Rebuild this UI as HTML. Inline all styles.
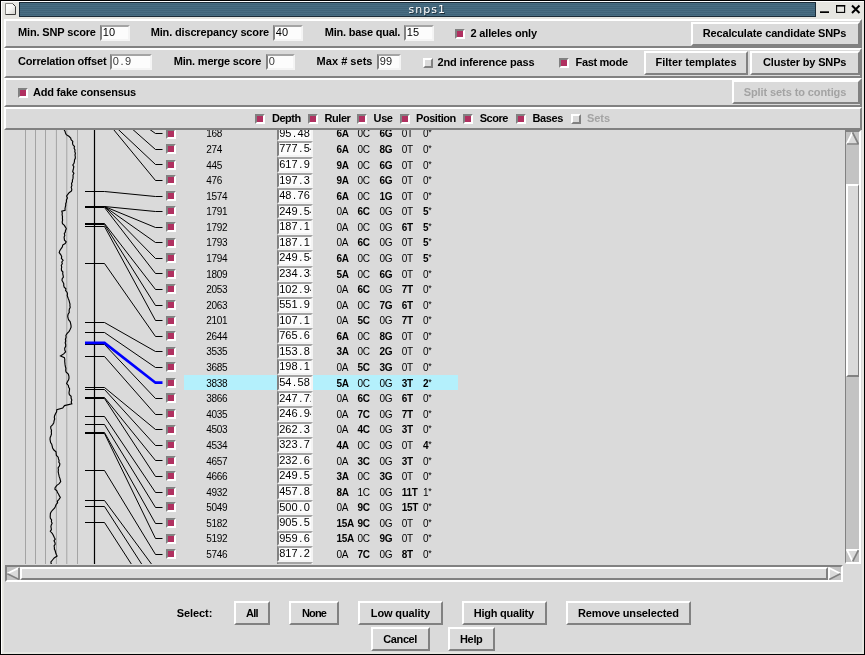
<!DOCTYPE html>
<html><head><meta charset="utf-8"><title>snps1</title>
<style>
html,body{margin:0;padding:0;}
body{width:865px;height:655px;overflow:hidden;background:#dadada;position:relative;font-family:"Liberation Sans",sans-serif;}
#root{left:0;top:0;width:865px;height:655px;will-change:transform;}
div,span.t,svg.abs,.abs{position:absolute;box-sizing:border-box;}
.t{white-space:nowrap;line-height:0;height:0;color:#000;}
.t.c{text-align:center;}
.b12{font-weight:bold;font-size:11px;margin-top:-3.8px;}
.b10{font-weight:bold;font-size:10px;margin-top:-3.45px;letter-spacing:-0.35px;}
.r10{font-size:10px;margin-top:-3.45px;letter-spacing:-0.35px;}
.st{font-size:9px;position:relative;top:-1.5px;font-weight:normal;letter-spacing:0;}
.ttl{font-family:"DejaVu Sans","Liberation Sans",sans-serif;font-size:11px;color:#fff;letter-spacing:1.0px;top:14px !important;margin-top:-3.8px;text-shadow:1px 1px 0 #1c2c36;}
.fr{border:2px solid;border-color:#ffffff #818181 #818181 #ffffff;background:#dadada;}
.btn{border:2px solid;border-color:#ffffff #818181 #818181 #ffffff;background:#dadada;}
.cb{border:2px solid;}
.cb.on{border-color:#818181 #ffffff #ffffff #818181;background:#b03060;}
.cb.off{border-color:#ffffff #818181 #818181 #ffffff;background:#dadada;}
.en{border:2px solid;border-color:#a4a4a4 #f4f4f4 #f4f4f4 #818181;background:#fcfcfc;overflow:hidden;box-shadow:inset 0 0 0 0 #000;}
.en::before{content:"";position:absolute;left:-2px;right:-2px;top:-2px;height:1px;background:#818181;}
.m{position:absolute;font-family:"Liberation Sans",sans-serif;font-size:11px;line-height:0;height:0;white-space:nowrap;margin-top:-3.8px;}
.m i{display:inline-block;width:6.15px;text-align:center;font-style:normal;}
.sb{border:2px solid;border-color:#818181 #ffffff #ffffff #818181;background:#c3c3c3;}
.sl{border:2px solid;border-color:#ffffff #818181 #818181 #ffffff;background:#dadada;}
#tb{background:repeating-linear-gradient(180deg,#486d82 0,#486d82 1px,#3f6378 1px,#3f6378 2px);border:1px solid #1b2c38;}
#mi{background:linear-gradient(135deg,#ffffff 0%,#f4f4f0 50%,#d8d8d2 100%);border:1px solid;border-color:#f8f8f8 #55554f #55554f #f8f8f8;border-radius:1px 3px 1px 1px;}
</style></head>
<body>
<div id="root">
<div class="abs" style="left:0;top:0;width:865px;height:655px;background:#000"></div>
<div class="abs" style="left:1px;top:1px;width:863px;height:653px;background:#fff"></div>
<div class="abs" style="left:2px;top:2px;width:862px;height:652px;background:#e6e6e1"></div>
<div class="abs" style="left:4px;top:19px;width:858px;height:633px;background:#dadada"></div>
<div class="abs" id="tb" style="left:19px;top:2px;width:797px;height:15px;"></div>
<span class="t ttl" style="left:408.5px;top:2px;">snps1</span>
<svg class="abs" style="left:4px;top:2px" width="13" height="14" viewBox="0 0 13 14">
<defs><linearGradient id="mig" x1="0" y1="0" x2="1" y2="1"><stop offset="0" stop-color="#ffffff"/><stop offset="0.5" stop-color="#f6f6f3"/><stop offset="1" stop-color="#cfcfca"/></linearGradient></defs>
<path d="M1.5 1.5 H8.5 L11.5 4.5 V12.5 H1.5 Z" fill="url(#mig)"/>
<path d="M1.5 12.5 V1.5 H8.5" fill="none" stroke="#8a8a86" stroke-width="1"/>
<path d="M8.5 1.5 L11.5 4.5 V12.5 H1.5" fill="none" stroke="#3c3c3a" stroke-width="1"/>
</svg>
<svg class="abs" style="left:816px;top:2px" width="48" height="15" viewBox="0 0 48 15">
<rect x="4" y="9.3" width="9" height="1.7" fill="#000"/>
<rect x="20.6" y="3.6" width="8" height="6.8" fill="none" stroke="#000" stroke-width="1.1"/>
<rect x="20" y="3" width="9.2" height="1.5" fill="#000"/>
<path d="M36 3.5 L43.5 11 M43.5 3.5 L36 11" stroke="#000" stroke-width="2" fill="none"/>
</svg>
<div class="fr" style="left:4px;top:19px;width:858px;height:29px;"></div>
<div class="fr" style="left:4px;top:48px;width:858px;height:30px;"></div>
<div class="fr" style="left:4px;top:78px;width:858px;height:29px;"></div>
<div class="fr" style="left:4px;top:107px;width:858px;height:23px;"></div>
<span id="t0" class="t b12" style="left:18px;top:36px;letter-spacing:-0.148px;">Min. SNP score</span>
<div class="en" style="left:100px;top:25px;width:30px;height:16px;"><span class="m" style="left:0.8px;top:9px;color:#000"><i>1</i><i>0</i></span></div>
<span id="t1" class="t b12" style="left:150.7px;top:36px;letter-spacing:-0.153px;">Min. discrepancy score</span>
<div class="en" style="left:273px;top:25px;width:30px;height:16px;"><span class="m" style="left:0.8px;top:9px;color:#000"><i>4</i><i>0</i></span></div>
<span id="t2" class="t b12" style="left:324.8px;top:36px;letter-spacing:-0.230px;">Min. base qual.</span>
<div class="en" style="left:404px;top:25px;width:30px;height:16px;"><span class="m" style="left:0.8px;top:9px;color:#000"><i>1</i><i>5</i></span></div>
<div class="cb on" style="left:455px;top:29px;width:10px;height:10px;"></div>
<span id="t3" class="t b12" style="left:470.4px;top:37px;letter-spacing:-0.135px;">2 alleles only</span>
<div class="btn" style="left:691px;top:22px;width:169px;height:24px;"></div>
<span id="t4" class="t b12" style="left:702.7px;top:37px;letter-spacing:-0.144px;">Recalculate candidate SNPs</span>
<span id="t5" class="t b12" style="left:18px;top:65px;letter-spacing:-0.182px;">Correlation offset</span>
<div class="en" style="left:110px;top:54px;width:42px;height:16px;"><span class="m" style="left:0.8px;top:9px;color:#3a3a3a"><i>0</i><i>.</i><i>9</i></span></div>
<span id="t6" class="t b12" style="left:173.7px;top:65px;letter-spacing:-0.187px;">Min. merge score</span>
<div class="en" style="left:266px;top:54px;width:29px;height:16px;"><span class="m" style="left:0.8px;top:9px;color:#3a3a3a"><i>0</i></span></div>
<span id="t7" class="t b12" style="left:316.6px;top:65px;letter-spacing:0.025px;">Max # sets</span>
<div class="en" style="left:377px;top:54px;width:24px;height:16px;"><span class="m" style="left:0.8px;top:9px;color:#1a1a1a"><i>9</i><i>9</i></span></div>
<div class="cb off" style="left:423px;top:58px;width:10px;height:10px;"></div>
<span id="t8" class="t b12" style="left:437.6px;top:66px;letter-spacing:-0.159px;">2nd inference pass</span>
<div class="cb on" style="left:559px;top:58px;width:10px;height:10px;"></div>
<span id="t9" class="t b12" style="left:575.5px;top:66px;letter-spacing:-0.312px;">Fast mode</span>
<div class="btn" style="left:644px;top:51px;width:104px;height:24px;"></div>
<span id="t10" class="t b12" style="left:655.5px;top:66px;letter-spacing:-0.019px;">Filter templates</span>
<div class="btn" style="left:750px;top:51px;width:110px;height:24px;"></div>
<span id="t11" class="t b12" style="left:763px;top:66px;letter-spacing:-0.153px;">Cluster by SNPs</span>
<div class="cb on" style="left:18px;top:88px;width:10px;height:10px;"></div>
<span id="t12" class="t b12" style="left:33px;top:96px;letter-spacing:-0.221px;">Add fake consensus</span>
<div class="btn" style="left:732px;top:80px;width:128px;height:24px;"></div>
<span id="t13" class="t b12" style="left:743.7px;top:96px;letter-spacing:-0.092px;color:#a3a3a3;">Split sets to contigs</span>
<div class="cb on" style="left:255px;top:114px;width:10px;height:10px;"></div>
<span id="t14" class="t b12" style="left:272px;top:122px;letter-spacing:-0.512px;">Depth</span>
<div class="cb on" style="left:308px;top:114px;width:10px;height:10px;"></div>
<span id="t15" class="t b12" style="left:324.4px;top:122px;letter-spacing:-0.406px;">Ruler</span>
<div class="cb on" style="left:357px;top:114px;width:10px;height:10px;"></div>
<span id="t16" class="t b12" style="left:373.6px;top:122px;letter-spacing:-0.396px;">Use</span>
<div class="cb on" style="left:400px;top:114px;width:10px;height:10px;"></div>
<span id="t17" class="t b12" style="left:416px;top:122px;letter-spacing:-0.449px;">Position</span>
<div class="cb on" style="left:463px;top:114px;width:10px;height:10px;"></div>
<span id="t18" class="t b12" style="left:479.7px;top:122px;letter-spacing:-0.475px;">Score</span>
<div class="cb on" style="left:516px;top:114px;width:10px;height:10px;"></div>
<span id="t19" class="t b12" style="left:532.6px;top:122px;letter-spacing:-0.425px;">Bases</span>
<div class="cb off" style="left:571px;top:114px;width:10px;height:10px;"></div>
<span id="t20" class="t b12" style="left:587px;top:122px;letter-spacing:-0.062px;color:#a3a3a3;">Sets</span>
<div class="abs" id="cv" style="left:4px;top:130px;width:841px;height:434px;overflow:hidden;">
<div class="abs" style="left:180px;top:245px;width:274px;height:15px;background:#b4f0fc"></div>
<svg class="abs" style="left:0;top:0" width="841" height="434" viewBox="4 130 841 434">
<line x1="25.5" y1="130" x2="25.5" y2="564" stroke="#a4a4a4" stroke-width="1"/>
<line x1="35.5" y1="130" x2="35.5" y2="564" stroke="#a4a4a4" stroke-width="1"/>
<line x1="45.5" y1="130" x2="45.5" y2="564" stroke="#a4a4a4" stroke-width="1"/>
<line x1="56.4" y1="130" x2="56.4" y2="564" stroke="#a4a4a4" stroke-width="1"/>
<line x1="66.8" y1="130" x2="66.8" y2="564" stroke="#a4a4a4" stroke-width="1"/>
<line x1="77.5" y1="130" x2="77.5" y2="564" stroke="#a4a4a4" stroke-width="1"/>
<polyline fill="none" stroke="#000" stroke-width="1.15" points="64.1,129.7 65.1,131.4 65.5,133.0 66.3,134.7 68.9,136.3 70.7,138.0 71.1,139.7 72.8,141.4 72.5,143.1 72.9,144.8 74.5,146.5 74.1,148.2 75.0,149.9 74.8,151.6 75.4,153.3 75.0,155.0 75.3,156.7 75.3,158.3 74.5,160.0 74.4,161.7 74.0,163.3 72.8,165.0 73.8,166.7 73.5,168.4 73.1,170.0 72.7,171.7 73.9,173.4 73.0,175.1 73.1,176.8 73.0,178.4 72.4,180.1 72.4,181.8 71.5,183.6 71.9,185.5 71.2,187.3 71.8,189.2 71.5,191.0 69.1,192.7 67.8,194.3 66.6,196.0 67.4,198.0 66.4,200.0 66.4,202.0 65.7,203.7 65.7,205.4 65.3,207.0 65.0,208.7 65.1,210.4 61.8,211.2 62.3,213.0 62.1,214.8 62.5,216.6 62.4,218.4 62.6,220.2 62.2,222.0 62.5,223.7 64.4,225.4 65.4,227.1 66.3,228.8 65.5,230.4 65.3,232.1 64.3,233.7 64.8,235.4 64.1,237.0 64.3,238.6 64.5,240.2 66.2,241.8 65.2,243.5 62.7,245.1 62.4,246.8 61.0,248.8 59.8,250.7 59.2,252.7 60.7,254.6 61.7,256.5 61.4,258.4 63.1,260.3 61.8,262.0 62.3,263.7 61.3,265.3 61.7,267.0 61.4,268.7 61.5,270.4 62.9,272.0 62.7,273.7 63.1,275.4 63.4,277.1 62.2,278.7 62.0,280.4 62.9,282.1 63.8,283.8 63.7,285.4 64.2,287.1 65.9,288.8 65.6,290.5 67.0,292.2 67.5,293.8 67.2,295.5 67.8,297.2 68.4,298.9 69.1,300.6 69.5,302.3 70.0,304.0 69.9,305.7 70.2,307.4 69.4,309.0 69.1,310.7 69.3,312.4 68.1,314.3 67.7,316.3 68.1,318.2 68.7,319.9 70.1,321.6 70.6,323.3 71.0,325.3 71.1,327.2 70.2,329.2 69.1,331.3 67.2,333.4 65.9,335.3 66.1,337.3 65.4,339.2 65.7,341.0 65.2,342.8 65.7,344.6 65.7,346.4 64.7,348.2 64.8,350.0 65.6,351.8 63.7,353.9 60.5,356.0 64.4,357.7 64.8,359.5 64.7,361.3 64.9,363.1 65.1,364.9 65.4,366.6 65.9,368.4 65.7,370.2 66.0,372.0 68.3,374.1 68.9,376.2 69.0,378.1 68.6,379.9 67.4,381.8 66.6,383.7 68.4,385.4 68.6,387.1 69.6,388.8 69.3,390.9 69.0,393.0 69.4,394.6 71.1,396.3 71.1,398.2 71.8,400.1 71.2,402.0 71.8,403.9 64.5,405.6 62.7,408.1 56.8,409.8 56.6,411.8 55.5,413.7 54.6,415.7 54.3,417.4 54.7,419.0 54.1,420.7 53.8,422.7 52.7,424.6 50.7,426.6 50.8,428.4 51.5,430.3 51.3,432.1 51.5,434.0 50.9,435.8 50.2,437.5 50.0,439.2 50.3,440.9 50.6,442.5 51.7,444.2 52.2,446.1 52.6,448.0 53.9,450.0 56.0,451.9 56.2,453.9 56.4,455.5 58.2,457.2 58.5,458.9 59.1,460.5 58.8,462.1 59.9,463.8 59.5,465.8 58.1,467.8 58.4,469.7 58.2,471.7 58.5,473.4 58.9,475.0 59.2,476.7 59.9,478.4 60.3,480.0 60.7,481.7 59.2,483.7 56.6,485.6 55.1,487.6 54.9,489.2 56.9,490.9 57.5,492.6 58.6,494.2 59.4,495.9 60.3,497.5 59.0,499.3 57.4,501.1 57.6,502.9 56.0,504.7 55.4,506.5 54.5,508.2 52.8,509.9 51.2,511.7 50.4,513.4 50.3,515.0 50.2,516.7 50.4,518.3 51.6,520.0 51.4,521.6 52.1,523.3 51.3,524.9 50.9,526.5 51.2,528.1 51.4,529.7 50.3,531.3 52.2,533.3 53.3,535.2 54.2,537.2 55.2,539.2 54.0,540.9 54.9,542.5 55.2,544.2 54.1,545.8 54.4,547.5 54.4,549.1 55.2,550.8 55.6,552.5 56.2,554.3 57.1,556.0 54.2,558.0 52.5,560.0 50.9,562.0 51.2,564.0 52.0,566.0"/>
<line x1="94.5" y1="130" x2="94.5" y2="564" stroke="#000" stroke-width="1.2"/>
<polyline fill="none" stroke="#000" stroke-width="1" points="85,97.5 104.5,97.5 155.5,133.5 162.5,133.5"/>
<polyline fill="none" stroke="#000" stroke-width="1" points="85,104.5 104.5,104.5 155.5,149.5 162.5,149.5"/>
<polyline fill="none" stroke="#000" stroke-width="1" points="85,116.5 104.5,116.5 155.5,164.5 162.5,164.5"/>
<polyline fill="none" stroke="#000" stroke-width="1" points="85,118.5 104.5,118.5 155.5,180.5 162.5,180.5"/>
<polyline fill="none" stroke="#000" stroke-width="1" points="85,191.5 104.5,191.5 155.5,196.5 162.5,196.5"/>
<polyline fill="none" stroke="#000" stroke-width="1" points="85,206.5 104.5,206.5 155.5,211.5 162.5,211.5"/>
<polyline fill="none" stroke="#000" stroke-width="1" points="85,206.5 104.5,206.5 155.5,227.5 162.5,227.5"/>
<polyline fill="none" stroke="#000" stroke-width="1" points="85,206.5 104.5,206.5 155.5,242.5 162.5,242.5"/>
<polyline fill="none" stroke="#000" stroke-width="1" points="85,206.5 104.5,206.5 155.5,258.5 162.5,258.5"/>
<polyline fill="none" stroke="#000" stroke-width="1" points="85,207.5 104.5,207.5 155.5,273.5 162.5,273.5"/>
<polyline fill="none" stroke="#000" stroke-width="1" points="85,223.5 104.5,223.5 155.5,289.5 162.5,289.5"/>
<polyline fill="none" stroke="#000" stroke-width="1" points="85,224.5 104.5,224.5 155.5,305.5 162.5,305.5"/>
<polyline fill="none" stroke="#000" stroke-width="1" points="85,226.5 104.5,226.5 155.5,320.5 162.5,320.5"/>
<polyline fill="none" stroke="#000" stroke-width="1" points="85,263.5 104.5,263.5 155.5,336.5 162.5,336.5"/>
<polyline fill="none" stroke="#000" stroke-width="1" points="85,322.5 104.5,322.5 155.5,351.5 162.5,351.5"/>
<polyline fill="none" stroke="#000" stroke-width="1" points="85,332.5 104.5,332.5 155.5,367.5 162.5,367.5"/>
<polyline fill="none" stroke="#000" stroke-width="1" points="85,344.5 104.5,344.5 155.5,398.5 162.5,398.5"/>
<polyline fill="none" stroke="#000" stroke-width="1" points="85,356.5 104.5,356.5 155.5,414.5 162.5,414.5"/>
<polyline fill="none" stroke="#000" stroke-width="1" points="85,387.5 104.5,387.5 155.5,429.5 162.5,429.5"/>
<polyline fill="none" stroke="#000" stroke-width="1" points="85,389.5 104.5,389.5 155.5,445.5 162.5,445.5"/>
<polyline fill="none" stroke="#000" stroke-width="1" points="85,397.5 104.5,397.5 155.5,460.5 162.5,460.5"/>
<polyline fill="none" stroke="#000" stroke-width="1" points="85,398.5 104.5,398.5 155.5,476.5 162.5,476.5"/>
<polyline fill="none" stroke="#000" stroke-width="1" points="85,416.5 104.5,416.5 155.5,492.5 162.5,492.5"/>
<polyline fill="none" stroke="#000" stroke-width="1" points="85,424.5 104.5,424.5 155.5,507.5 162.5,507.5"/>
<polyline fill="none" stroke="#000" stroke-width="1" points="85,432.5 104.5,432.5 155.5,523.5 162.5,523.5"/>
<polyline fill="none" stroke="#000" stroke-width="1" points="85,433.5 104.5,433.5 155.5,538.5 162.5,538.5"/>
<polyline fill="none" stroke="#000" stroke-width="1" points="85,470.5 104.5,470.5 155.5,554.5 162.5,554.5"/>
<polyline fill="none" stroke="#000" stroke-width="1" points="85,500.5 104.5,500.5 155.5,569.5 162.5,569.5"/>
<polyline fill="none" stroke="#000" stroke-width="1" points="85,506.5 104.5,506.5 155.5,585.5 162.5,585.5"/>
<polyline fill="none" stroke="#000" stroke-width="1" points="85,522.5 104.5,522.5 155.5,601.5 162.5,601.5"/>
<polyline fill="none" stroke="#0000ff" stroke-width="2.7" points="85,342.9 104.5,342.9 155.5,382.7 162.5,382.7"/>
</svg>
<div class="en" style="left:273px;top:-4px;width:36px;height:15px;"><span class="m" style="left:0.2px;top:9px"><i>9</i><i>5</i><i>.</i><i>4</i><i>8</i></span></div>
<div class="cb on" style="left:162px;top:-1px;width:10px;height:10px"></div>
<span class="t r10" style="left:202.3px;top:7px">168</span>
<span class="t b10" style="left:332.5px;top:7px">6A</span>
<span class="t r10" style="left:353.5px;top:7px">0C</span>
<span class="t b10" style="left:375.5px;top:7px">6G</span>
<span class="t r10" style="left:397.8px;top:7px">0T</span>
<span class="t r10" style="left:419px;top:7px">0<span class="st">*</span></span>
<div class="en" style="left:273px;top:11px;width:36px;height:16px;"><span class="m" style="left:0.2px;top:9px"><i>7</i><i>7</i><i>7</i><i>.</i><i>5</i><i>4</i></span></div>
<div class="cb on" style="left:162px;top:14px;width:10px;height:10px"></div>
<span class="t r10" style="left:202.3px;top:23px">274</span>
<span class="t b10" style="left:332.5px;top:23px">6A</span>
<span class="t r10" style="left:353.5px;top:23px">0C</span>
<span class="t b10" style="left:375.5px;top:23px">8G</span>
<span class="t r10" style="left:397.8px;top:23px">0T</span>
<span class="t r10" style="left:419px;top:23px">0<span class="st">*</span></span>
<div class="en" style="left:273px;top:27px;width:36px;height:16px;"><span class="m" style="left:0.2px;top:9px"><i>6</i><i>1</i><i>7</i><i>.</i><i>9</i></span></div>
<div class="cb on" style="left:162px;top:30px;width:10px;height:10px"></div>
<span class="t r10" style="left:202.3px;top:39px">445</span>
<span class="t b10" style="left:332.5px;top:39px">9A</span>
<span class="t r10" style="left:353.5px;top:39px">0C</span>
<span class="t b10" style="left:375.5px;top:39px">6G</span>
<span class="t r10" style="left:397.8px;top:39px">0T</span>
<span class="t r10" style="left:419px;top:39px">0<span class="st">*</span></span>
<div class="en" style="left:273px;top:43px;width:36px;height:15px;"><span class="m" style="left:0.2px;top:9px"><i>1</i><i>9</i><i>7</i><i>.</i><i>3</i></span></div>
<div class="cb on" style="left:162px;top:45px;width:10px;height:10px"></div>
<span class="t r10" style="left:202.3px;top:54px">476</span>
<span class="t b10" style="left:332.5px;top:54px">9A</span>
<span class="t r10" style="left:353.5px;top:54px">0C</span>
<span class="t b10" style="left:375.5px;top:54px">6G</span>
<span class="t r10" style="left:397.8px;top:54px">0T</span>
<span class="t r10" style="left:419px;top:54px">0<span class="st">*</span></span>
<div class="en" style="left:273px;top:58px;width:36px;height:16px;"><span class="m" style="left:0.2px;top:9px"><i>4</i><i>8</i><i>.</i><i>7</i><i>6</i></span></div>
<div class="cb on" style="left:162px;top:61px;width:10px;height:10px"></div>
<span class="t r10" style="left:202.3px;top:70px">1574</span>
<span class="t b10" style="left:332.5px;top:70px">6A</span>
<span class="t r10" style="left:353.5px;top:70px">0C</span>
<span class="t b10" style="left:375.5px;top:70px">1G</span>
<span class="t r10" style="left:397.8px;top:70px">0T</span>
<span class="t r10" style="left:419px;top:70px">0<span class="st">*</span></span>
<div class="en" style="left:273px;top:74px;width:36px;height:15px;"><span class="m" style="left:0.2px;top:9px"><i>2</i><i>4</i><i>9</i><i>.</i><i>5</i><i>4</i></span></div>
<div class="cb on" style="left:162px;top:76px;width:10px;height:10px"></div>
<span class="t r10" style="left:202.3px;top:85px">1791</span>
<span class="t r10" style="left:332.5px;top:85px">0A</span>
<span class="t b10" style="left:353.5px;top:85px">6C</span>
<span class="t r10" style="left:375.5px;top:85px">0G</span>
<span class="t r10" style="left:397.8px;top:85px">0T</span>
<span class="t b10" style="left:419px;top:85px">5<span class="st">*</span></span>
<div class="en" style="left:273px;top:89px;width:36px;height:16px;"><span class="m" style="left:0.2px;top:9px"><i>1</i><i>8</i><i>7</i><i>.</i><i>1</i></span></div>
<div class="cb on" style="left:162px;top:92px;width:10px;height:10px"></div>
<span class="t r10" style="left:202.3px;top:101px">1792</span>
<span class="t r10" style="left:332.5px;top:101px">0A</span>
<span class="t r10" style="left:353.5px;top:101px">0C</span>
<span class="t r10" style="left:375.5px;top:101px">0G</span>
<span class="t b10" style="left:397.8px;top:101px">6T</span>
<span class="t b10" style="left:419px;top:101px">5<span class="st">*</span></span>
<div class="en" style="left:273px;top:105px;width:36px;height:15px;"><span class="m" style="left:0.2px;top:9px"><i>1</i><i>8</i><i>7</i><i>.</i><i>1</i></span></div>
<div class="cb on" style="left:162px;top:108px;width:10px;height:10px"></div>
<span class="t r10" style="left:202.3px;top:116px">1793</span>
<span class="t r10" style="left:332.5px;top:116px">0A</span>
<span class="t b10" style="left:353.5px;top:116px">6C</span>
<span class="t r10" style="left:375.5px;top:116px">0G</span>
<span class="t r10" style="left:397.8px;top:116px">0T</span>
<span class="t b10" style="left:419px;top:116px">5<span class="st">*</span></span>
<div class="en" style="left:273px;top:120px;width:36px;height:16px;"><span class="m" style="left:0.2px;top:9px"><i>2</i><i>4</i><i>9</i><i>.</i><i>5</i><i>4</i></span></div>
<div class="cb on" style="left:162px;top:123px;width:10px;height:10px"></div>
<span class="t r10" style="left:202.3px;top:132px">1794</span>
<span class="t b10" style="left:332.5px;top:132px">6A</span>
<span class="t r10" style="left:353.5px;top:132px">0C</span>
<span class="t r10" style="left:375.5px;top:132px">0G</span>
<span class="t r10" style="left:397.8px;top:132px">0T</span>
<span class="t b10" style="left:419px;top:132px">5<span class="st">*</span></span>
<div class="en" style="left:273px;top:136px;width:36px;height:16px;"><span class="m" style="left:0.2px;top:9px"><i>2</i><i>3</i><i>4</i><i>.</i><i>3</i><i>3</i></span></div>
<div class="cb on" style="left:162px;top:139px;width:10px;height:10px"></div>
<span class="t r10" style="left:202.3px;top:148px">1809</span>
<span class="t b10" style="left:332.5px;top:148px">5A</span>
<span class="t r10" style="left:353.5px;top:148px">0C</span>
<span class="t b10" style="left:375.5px;top:148px">6G</span>
<span class="t r10" style="left:397.8px;top:148px">0T</span>
<span class="t r10" style="left:419px;top:148px">0<span class="st">*</span></span>
<div class="en" style="left:273px;top:152px;width:36px;height:15px;"><span class="m" style="left:0.2px;top:9px"><i>1</i><i>0</i><i>2</i><i>.</i><i>9</i><i>4</i></span></div>
<div class="cb on" style="left:162px;top:154px;width:10px;height:10px"></div>
<span class="t r10" style="left:202.3px;top:163px">2053</span>
<span class="t r10" style="left:332.5px;top:163px">0A</span>
<span class="t b10" style="left:353.5px;top:163px">6C</span>
<span class="t r10" style="left:375.5px;top:163px">0G</span>
<span class="t b10" style="left:397.8px;top:163px">7T</span>
<span class="t r10" style="left:419px;top:163px">0<span class="st">*</span></span>
<div class="en" style="left:273px;top:167px;width:36px;height:16px;"><span class="m" style="left:0.2px;top:9px"><i>5</i><i>5</i><i>1</i><i>.</i><i>9</i></span></div>
<div class="cb on" style="left:162px;top:170px;width:10px;height:10px"></div>
<span class="t r10" style="left:202.3px;top:179px">2063</span>
<span class="t r10" style="left:332.5px;top:179px">0A</span>
<span class="t r10" style="left:353.5px;top:179px">0C</span>
<span class="t b10" style="left:375.5px;top:179px">7G</span>
<span class="t b10" style="left:397.8px;top:179px">6T</span>
<span class="t r10" style="left:419px;top:179px">0<span class="st">*</span></span>
<div class="en" style="left:273px;top:183px;width:36px;height:15px;"><span class="m" style="left:0.2px;top:9px"><i>1</i><i>0</i><i>7</i><i>.</i><i>1</i></span></div>
<div class="cb on" style="left:162px;top:186px;width:10px;height:10px"></div>
<span class="t r10" style="left:202.3px;top:194px">2101</span>
<span class="t r10" style="left:332.5px;top:194px">0A</span>
<span class="t b10" style="left:353.5px;top:194px">5C</span>
<span class="t r10" style="left:375.5px;top:194px">0G</span>
<span class="t b10" style="left:397.8px;top:194px">7T</span>
<span class="t r10" style="left:419px;top:194px">0<span class="st">*</span></span>
<div class="en" style="left:273px;top:198px;width:36px;height:16px;"><span class="m" style="left:0.2px;top:9px"><i>7</i><i>6</i><i>5</i><i>.</i><i>6</i></span></div>
<div class="cb on" style="left:162px;top:201px;width:10px;height:10px"></div>
<span class="t r10" style="left:202.3px;top:210px">2644</span>
<span class="t b10" style="left:332.5px;top:210px">6A</span>
<span class="t r10" style="left:353.5px;top:210px">0C</span>
<span class="t b10" style="left:375.5px;top:210px">8G</span>
<span class="t r10" style="left:397.8px;top:210px">0T</span>
<span class="t r10" style="left:419px;top:210px">0<span class="st">*</span></span>
<div class="en" style="left:273px;top:214px;width:36px;height:15px;"><span class="m" style="left:0.2px;top:9px"><i>1</i><i>5</i><i>3</i><i>.</i><i>8</i></span></div>
<div class="cb on" style="left:162px;top:217px;width:10px;height:10px"></div>
<span class="t r10" style="left:202.3px;top:225px">3535</span>
<span class="t b10" style="left:332.5px;top:225px">3A</span>
<span class="t r10" style="left:353.5px;top:225px">0C</span>
<span class="t b10" style="left:375.5px;top:225px">2G</span>
<span class="t r10" style="left:397.8px;top:225px">0T</span>
<span class="t r10" style="left:419px;top:225px">0<span class="st">*</span></span>
<div class="en" style="left:273px;top:229px;width:36px;height:16px;"><span class="m" style="left:0.2px;top:9px"><i>1</i><i>9</i><i>8</i><i>.</i><i>1</i></span></div>
<div class="cb on" style="left:162px;top:232px;width:10px;height:10px"></div>
<span class="t r10" style="left:202.3px;top:241px">3685</span>
<span class="t r10" style="left:332.5px;top:241px">0A</span>
<span class="t b10" style="left:353.5px;top:241px">5C</span>
<span class="t b10" style="left:375.5px;top:241px">3G</span>
<span class="t r10" style="left:397.8px;top:241px">0T</span>
<span class="t r10" style="left:419px;top:241px">0<span class="st">*</span></span>
<div class="en" style="left:273px;top:245px;width:36px;height:16px;"><span class="m" style="left:0.2px;top:9px"><i>5</i><i>4</i><i>.</i><i>5</i><i>8</i></span></div>
<div class="cb on" style="left:162px;top:248px;width:10px;height:10px"></div>
<span class="t r10" style="left:202.3px;top:257px">3838</span>
<span class="t b10" style="left:332.5px;top:257px">5A</span>
<span class="t r10" style="left:353.5px;top:257px">0C</span>
<span class="t r10" style="left:375.5px;top:257px">0G</span>
<span class="t b10" style="left:397.8px;top:257px">3T</span>
<span class="t b10" style="left:419px;top:257px">2<span class="st">*</span></span>
<div class="en" style="left:273px;top:261px;width:36px;height:15px;"><span class="m" style="left:0.2px;top:9px"><i>2</i><i>4</i><i>7</i><i>.</i><i>7</i><i>2</i></span></div>
<div class="cb on" style="left:162px;top:263px;width:10px;height:10px"></div>
<span class="t r10" style="left:202.3px;top:272px">3866</span>
<span class="t r10" style="left:332.5px;top:272px">0A</span>
<span class="t b10" style="left:353.5px;top:272px">6C</span>
<span class="t r10" style="left:375.5px;top:272px">0G</span>
<span class="t b10" style="left:397.8px;top:272px">6T</span>
<span class="t r10" style="left:419px;top:272px">0<span class="st">*</span></span>
<div class="en" style="left:273px;top:276px;width:36px;height:16px;"><span class="m" style="left:0.2px;top:9px"><i>2</i><i>4</i><i>6</i><i>.</i><i>9</i><i>4</i></span></div>
<div class="cb on" style="left:162px;top:279px;width:10px;height:10px"></div>
<span class="t r10" style="left:202.3px;top:288px">4035</span>
<span class="t r10" style="left:332.5px;top:288px">0A</span>
<span class="t b10" style="left:353.5px;top:288px">7C</span>
<span class="t r10" style="left:375.5px;top:288px">0G</span>
<span class="t b10" style="left:397.8px;top:288px">7T</span>
<span class="t r10" style="left:419px;top:288px">0<span class="st">*</span></span>
<div class="en" style="left:273px;top:292px;width:36px;height:15px;"><span class="m" style="left:0.2px;top:9px"><i>2</i><i>6</i><i>2</i><i>.</i><i>3</i></span></div>
<div class="cb on" style="left:162px;top:295px;width:10px;height:10px"></div>
<span class="t r10" style="left:202.3px;top:303px">4503</span>
<span class="t r10" style="left:332.5px;top:303px">0A</span>
<span class="t b10" style="left:353.5px;top:303px">4C</span>
<span class="t r10" style="left:375.5px;top:303px">0G</span>
<span class="t b10" style="left:397.8px;top:303px">3T</span>
<span class="t r10" style="left:419px;top:303px">0<span class="st">*</span></span>
<div class="en" style="left:273px;top:307px;width:36px;height:16px;"><span class="m" style="left:0.2px;top:9px"><i>3</i><i>2</i><i>3</i><i>.</i><i>7</i></span></div>
<div class="cb on" style="left:162px;top:310px;width:10px;height:10px"></div>
<span class="t r10" style="left:202.3px;top:319px">4534</span>
<span class="t b10" style="left:332.5px;top:319px">4A</span>
<span class="t r10" style="left:353.5px;top:319px">0C</span>
<span class="t r10" style="left:375.5px;top:319px">0G</span>
<span class="t r10" style="left:397.8px;top:319px">0T</span>
<span class="t b10" style="left:419px;top:319px">4<span class="st">*</span></span>
<div class="en" style="left:273px;top:323px;width:36px;height:15px;"><span class="m" style="left:0.2px;top:9px"><i>2</i><i>3</i><i>2</i><i>.</i><i>6</i></span></div>
<div class="cb on" style="left:162px;top:326px;width:10px;height:10px"></div>
<span class="t r10" style="left:202.3px;top:335px">4657</span>
<span class="t r10" style="left:332.5px;top:335px">0A</span>
<span class="t b10" style="left:353.5px;top:335px">3C</span>
<span class="t r10" style="left:375.5px;top:335px">0G</span>
<span class="t b10" style="left:397.8px;top:335px">3T</span>
<span class="t r10" style="left:419px;top:335px">0<span class="st">*</span></span>
<div class="en" style="left:273px;top:338px;width:36px;height:16px;"><span class="m" style="left:0.2px;top:9px"><i>2</i><i>4</i><i>9</i><i>.</i><i>5</i></span></div>
<div class="cb on" style="left:162px;top:341px;width:10px;height:10px"></div>
<span class="t r10" style="left:202.3px;top:350px">4666</span>
<span class="t b10" style="left:332.5px;top:350px">3A</span>
<span class="t r10" style="left:353.5px;top:350px">0C</span>
<span class="t b10" style="left:375.5px;top:350px">3G</span>
<span class="t r10" style="left:397.8px;top:350px">0T</span>
<span class="t r10" style="left:419px;top:350px">0<span class="st">*</span></span>
<div class="en" style="left:273px;top:354px;width:36px;height:16px;"><span class="m" style="left:0.2px;top:9px"><i>4</i><i>5</i><i>7</i><i>.</i><i>8</i></span></div>
<div class="cb on" style="left:162px;top:357px;width:10px;height:10px"></div>
<span class="t r10" style="left:202.3px;top:366px">4932</span>
<span class="t b10" style="left:332.5px;top:366px">8A</span>
<span class="t r10" style="left:353.5px;top:366px">1C</span>
<span class="t r10" style="left:375.5px;top:366px">0G</span>
<span class="t b10" style="left:397.8px;top:366px">11T</span>
<span class="t r10" style="left:419px;top:366px">1<span class="st">*</span></span>
<div class="en" style="left:273px;top:370px;width:36px;height:15px;"><span class="m" style="left:0.2px;top:9px"><i>5</i><i>0</i><i>0</i><i>.</i><i>0</i></span></div>
<div class="cb on" style="left:162px;top:372px;width:10px;height:10px"></div>
<span class="t r10" style="left:202.3px;top:381px">5049</span>
<span class="t r10" style="left:332.5px;top:381px">0A</span>
<span class="t b10" style="left:353.5px;top:381px">9C</span>
<span class="t r10" style="left:375.5px;top:381px">0G</span>
<span class="t b10" style="left:397.8px;top:381px">15T</span>
<span class="t r10" style="left:419px;top:381px">0<span class="st">*</span></span>
<div class="en" style="left:273px;top:385px;width:36px;height:16px;"><span class="m" style="left:0.2px;top:9px"><i>9</i><i>0</i><i>5</i><i>.</i><i>5</i></span></div>
<div class="cb on" style="left:162px;top:388px;width:10px;height:10px"></div>
<span class="t r10" style="left:202.3px;top:397px">5182</span>
<span class="t b10" style="left:332.5px;top:397px">15A</span>
<span class="t b10" style="left:353.5px;top:397px">9C</span>
<span class="t r10" style="left:375.5px;top:397px">0G</span>
<span class="t r10" style="left:397.8px;top:397px">0T</span>
<span class="t r10" style="left:419px;top:397px">0<span class="st">*</span></span>
<div class="en" style="left:273px;top:401px;width:36px;height:15px;"><span class="m" style="left:0.2px;top:9px"><i>9</i><i>5</i><i>9</i><i>.</i><i>6</i></span></div>
<div class="cb on" style="left:162px;top:404px;width:10px;height:10px"></div>
<span class="t r10" style="left:202.3px;top:412px">5192</span>
<span class="t b10" style="left:332.5px;top:412px">15A</span>
<span class="t r10" style="left:353.5px;top:412px">0C</span>
<span class="t b10" style="left:375.5px;top:412px">9G</span>
<span class="t r10" style="left:397.8px;top:412px">0T</span>
<span class="t r10" style="left:419px;top:412px">0<span class="st">*</span></span>
<div class="en" style="left:273px;top:416px;width:36px;height:16px;"><span class="m" style="left:0.2px;top:9px"><i>8</i><i>1</i><i>7</i><i>.</i><i>2</i></span></div>
<div class="cb on" style="left:162px;top:419px;width:10px;height:10px"></div>
<span class="t r10" style="left:202.3px;top:428px">5746</span>
<span class="t r10" style="left:332.5px;top:428px">0A</span>
<span class="t b10" style="left:353.5px;top:428px">7C</span>
<span class="t r10" style="left:375.5px;top:428px">0G</span>
<span class="t b10" style="left:397.8px;top:428px">8T</span>
<span class="t r10" style="left:419px;top:428px">0<span class="st">*</span></span>
<div class="en" style="left:273px;top:432px;width:36px;height:16px;"><span class="m" style="left:0.2px;top:9px"></span></div>
</div>
<div class="sb" style="left:845px;top:130px;width:16px;height:434px;border-left-width:1px;"></div>
<svg class="abs" style="left:846px;top:132px" width="13" height="430" viewBox="0 0 13 430">
<path d="M6.5 0.3 L0.2 12.8 L12.8 12.8 Z" fill="#dadada"/>
<path d="M6.5 0.3 L0.6 12.2" stroke="#fff" stroke-width="1.8" fill="none"/>
<path d="M6.5 0.3 L12.4 12 M0.8 12 L12.8 12" stroke="#818181" stroke-width="1.7" fill="none"/>
<path d="M6.5 429.7 L0.2 417.2 L12.8 417.2 Z" fill="#dadada"/>
<path d="M0.2 418 L12.8 418 M0.8 417.6 L6.5 429.4" stroke="#fff" stroke-width="1.8" fill="none"/>
<path d="M6.7 429.4 L12.4 418.2" stroke="#818181" stroke-width="1.7" fill="none"/>
</svg>
<div class="sl" style="left:846px;top:184px;width:13px;height:193px;border-right-width:1px;"></div>
<div class="sb" style="left:5px;top:565px;width:838px;height:17px;"></div>
<svg class="abs" style="left:7px;top:567px" width="834" height="13" viewBox="0 0 834 13">
<path d="M0.3 6.5 L12.8 0.2 L12.8 12.8 Z" fill="#dadada"/>
<path d="M0.3 6.5 L12.2 0.6" stroke="#fff" stroke-width="1.8" fill="none"/>
<path d="M12 0.8 L12 12.8 M0.3 6.7 L12 12.4" stroke="#818181" stroke-width="1.7" fill="none"/>
<path d="M833.7 6.5 L821.2 0.2 L821.2 12.8 Z" fill="#dadada"/>
<path d="M822 12.8 L822 0.2 M821.6 0.8 L833.4 6.5" stroke="#fff" stroke-width="1.8" fill="none"/>
<path d="M833.4 6.7 L822.2 12.4" stroke="#818181" stroke-width="1.7" fill="none"/>
</svg>
<div class="sl" style="left:20px;top:567px;width:808px;height:13px;"></div>
<span id="t21" class="t b12" style="left:176.7px;top:617px;letter-spacing:-0.069px;">Select:</span>
<div class="btn" style="left:234px;top:601px;width:36px;height:24px;"></div>
<span id="t22" class="t b12" style="left:246px;top:617px;letter-spacing:-0.785px;">All</span>
<div class="btn" style="left:289px;top:601px;width:50px;height:24px;"></div>
<span id="t23" class="t b12" style="left:302px;top:617px;letter-spacing:-0.875px;">None</span>
<div class="btn" style="left:358px;top:601px;width:85px;height:24px;"></div>
<span id="t24" class="t b12" style="left:370.8px;top:617px;letter-spacing:-0.119px;">Low quality</span>
<div class="btn" style="left:462px;top:601px;width:85px;height:24px;"></div>
<span id="t25" class="t b12" style="left:473.8px;top:617px;letter-spacing:-0.238px;">High quality</span>
<div class="btn" style="left:566px;top:601px;width:125px;height:24px;"></div>
<span id="t26" class="t b12" style="left:578px;top:617px;letter-spacing:-0.154px;">Remove unselected</span>
<div class="btn" style="left:371px;top:627px;width:59px;height:24px;"></div>
<span id="t27" class="t b12" style="left:383.3px;top:643px;letter-spacing:-0.398px;">Cancel</span>
<div class="btn" style="left:448px;top:627px;width:47px;height:24px;"></div>
<span id="t28" class="t b12" style="left:460px;top:643px;letter-spacing:-0.336px;">Help</span>
<div class="abs" style="left:864px;top:0;width:1px;height:655px;background:#000"></div>
<div class="abs" style="left:0;top:654px;width:865px;height:1px;background:#000"></div>
</div>
</body></html>
